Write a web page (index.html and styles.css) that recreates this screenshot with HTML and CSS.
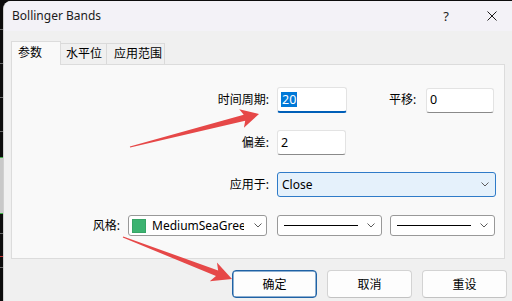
FILE: index.html
```html
<!DOCTYPE html>
<html lang="zh-CN">
<head>
<meta charset="utf-8">
<title>Bollinger Bands</title>
<link rel="stylesheet" href="styles.css">
</head>
<body>
<div class="screen">
  <div class="chart-edge"></div>
  <div class="dialog">
    <div class="titlebar">
      <span class="title">Bollinger Bands</span>
      <span class="help">?</span>
      <span class="close">
        <svg width="10" height="10" viewBox="0 0 10 10"><path d="M0.5 0.5 L9.5 9.5 M9.5 0.5 L0.5 9.5" stroke="#1a1a1a" stroke-width="1" fill="none"/></svg>
      </span>
    </div>
    <div class="content">
      <div class="tabs">
        <div class="tab active">参数</div>
        <div class="tab t2">水平位</div>
        <div class="tab t3">应用范围</div>
      </div>
      <div class="panel">
        <div class="row r1">
          <span class="lbl">时间周期:</span>
          <span class="input focused"><span class="sel">20</span></span>
          <span class="lbl2">平移:</span>
          <span class="input w68">0</span>
        </div>
        <div class="row r2">
          <span class="lbl">偏差:</span>
          <span class="input w69">2</span>
        </div>
        <div class="row r3">
          <span class="lbl">应用于:</span>
          <span class="select active-select w219"><span class="val">Close</span>
            <svg class="chev" width="8" height="5" viewBox="0 0 8 5"><polyline points="0.5,0.5 4,4 7.5,0.5" fill="none" stroke="#5c5c5c" stroke-width="1"/></svg>
          </span>
        </div>
        <div class="row r4">
          <span class="lbl lbl-style">风格:</span>
          <span class="select color-select"><span class="swatch"></span><span class="cname">MediumSeaGreen</span>
            <svg class="chev c4" width="8" height="5" viewBox="0 0 8 5"><polyline points="0.5,0.5 4,4 7.5,0.5" fill="none" stroke="#5c5c5c" stroke-width="1"/></svg>
          </span>
          <span class="select line-select ls1"><span class="line"></span>
            <svg class="chev" width="8" height="5" viewBox="0 0 8 5"><polyline points="0.5,0.5 4,4 7.5,0.5" fill="none" stroke="#5c5c5c" stroke-width="1"/></svg>
          </span>
          <span class="select line-select"><span class="line"></span>
            <svg class="chev" width="8" height="5" viewBox="0 0 8 5"><polyline points="0.5,0.5 4,4 7.5,0.5" fill="none" stroke="#5c5c5c" stroke-width="1"/></svg>
          </span>
        </div>
      </div>
      <div class="buttons">
        <button class="btn default">确定</button>
        <button class="btn">取消</button>
        <button class="btn">重设</button>
      </div>
    </div>
  </div>
</div>
<svg class="arrows" width="512" height="301" viewBox="0 0 512 301">
  <polygon fill="#e64848" points="130.15,147.58 245.21,120.63 243.92,127.66 259,114 239.22,109.26 243.73,114.81 129.85,146.42"/>
  <polygon fill="#e64848" points="122.78,237.56 215.99,276.05 209.74,281.14 232,279 216.94,262.48 218.15,270.45 123.22,236.44"/>
</svg>
</body>
</html>
```

FILE: styles.css
```css
* { box-sizing: border-box; margin: 0; padding: 0; }
html, body { width: 512px; height: 301px; overflow: hidden; }
body {
  background: #0c0c0c;
  font-family: "Noto Sans", "Noto Sans CJK SC", sans-serif;
  font-size: 12px;
  color: #000;
  position: relative;
}
.screen { display: flex; height: 301px; }
.chart-edge {
  width: 3px;
  flex: none;
  background: linear-gradient(to bottom,
    #0c0c0c 0 29px, #666 29px 30px, #0c0c0c 30px 63px, #666 63px 64px,
    #0c0c0c 64px 97px, #666 97px 98px, #0c0c0c 98px 131px, #666 131px 132px,
    #0c0c0c 132px 157px, #3cb043 157px 158px, #c8c8c8 158px 213px, #3cb043 213px 214px,
    #0c0c0c 214px 233px, #666 233px 234px, #0c0c0c 234px 256px, #c03030 256px 257px,
    #0c0c0c 257px 267px, #666 267px 268px, #0c0c0c 268px);
}
.dialog {
  width: 509px;
  height: 300px;
  margin-top: 1px;
  flex: none;
  display: flex;
  flex-direction: column;
  background: #f0f0f0;
  border-left: 1px solid #d0d0d0;
  border-top-left-radius: 8px;
  overflow: hidden;
}
.titlebar {
  height: 30px;
  flex: none;
  display: flex;
  align-items: center;
  background: #f3f2f7;
  padding-left: 8px;
  line-height: 16px;
}
.title { flex: 1; color: #1b1b1b; }
.help { width: 20px; text-align: center; font-size: 13px; color: #1b1b1b; }
.close { width: 20px; margin-left: 26px; margin-right: 10px; display: flex; justify-content: center; }
.content { flex: 1; padding: 10px 7px 0 7px; display: flex; flex-direction: column; }
.tabs { display: flex; align-items: flex-end; height: 23px; }
.tab {
  height: 21px;
  border: 1px solid #dadada;
  border-bottom: none;
  background: #f0f0f0;
  display: flex;
  align-items: center;
  line-height: 16px;
  margin-left: -1px;
}
.tab.active {
  width: 50px;
  height: 24px;
  margin-left: 0;
  margin-bottom: -1px;
  padding-left: 6px;
  padding-bottom: 1px;
  background: #f9f9f9;
  border-color: #dcdcdc;
  position: relative;
  z-index: 1;
}
.tab.t2 { width: 47px; padding-left: 5px; }
.tab.t3 { width: 59px; padding-left: 7px; }
.panel {
  height: 195px;
  flex: none;
  border: 1px solid #dcdcdc;
  background: #f9f9f9;
  display: flex;
  flex-direction: column;
}
.row { display: flex; align-items: center; line-height: 16px; }
.r1 { height: 26px; margin-top: 22px; }
.r2 { height: 25px; margin-top: 17px; }
.r3 { height: 25px; margin-top: 17px; }
.r4 { height: 21px; margin-top: 18px; }
.lbl { width: 257px; text-align: right; margin-right: 8px; flex: none; }
.lbl-style { width: 108px; }
.lbl2 { width: 27px; margin-left: 42px; margin-right: 10px; flex: none; white-space: nowrap; }
.input {
  height: 25px;
  background: #fff;
  border: 1px solid #e3e3e3;
  border-bottom-color: #8a8a8a;
  border-radius: 3px;
  display: flex;
  align-items: center;
  padding-left: 3px;
  flex: none;
  font-size: 12.5px;
}
.input.focused { width: 70px; height: 26px; border-bottom: 2px solid #005fb8; }
.input .sel { background: #0078d7; color: #fff; line-height: 15px; padding: 0 1px; }
.w68 { width: 68px; }
.w69 { width: 69px; }
.select {
  display: flex;
  align-items: center;
  height: 21px;
  background: #fff;
  border: 1px solid #999;
  border-radius: 3px;
  flex: none;
}
.active-select {
  height: 25px;
  background: #e5f1fb;
  border-color: #2f7bc8;
  padding-left: 4px;
}
.w219 { width: 219px; }
.chev { margin-left: auto; margin-right: 6px; flex: none; }
.chev.c4 { margin-right: 4px; }
.color-select { width: 139px; margin-right: 10px; padding-left: 3px; height: 21px; }
.swatch { width: 14px; height: 14px; background: #3cb371; border: 1px solid #36a466; margin-right: 6px; flex: none; }
.cname { width: 92px; overflow: hidden; white-space: nowrap; flex: none; }
.line-select { width: 105px; padding-left: 6px; }
.ls1 { margin-right: 8px; }
.line { width: 74px; height: 1px; background: #000; flex: none; }
.buttons { display: flex; justify-content: flex-end; gap: 10px; margin-top: 11px; margin-right: -2px; }
.btn {
  width: 85px;
  height: 28px;
  background: #fdfdfd;
  border: 1px solid #d3d3d3;
  border-bottom-color: #c2c2c2;
  border-radius: 4px;
  font-family: "Noto Sans", "Noto Sans CJK SC", sans-serif;
  font-size: 12px;
  color: #000;
}
.btn.default { border: 1px solid #1f62a5; box-shadow: inset 0 0 0 0.5px #1f62a5; }
.arrows { position: absolute; left: 0; top: 0; pointer-events: none; }
```
